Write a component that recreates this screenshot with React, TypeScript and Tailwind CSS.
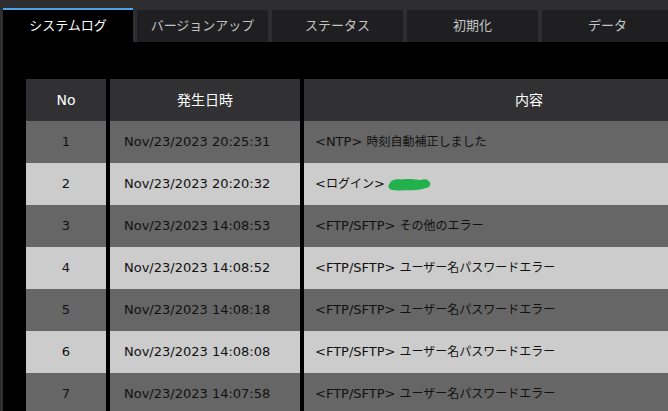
import React from 'react';

const tabs = ['システムログ', 'バージョンアップ', 'ステータス', '初期化', 'データ'];

const rows = [
  { no: 1, date: 'Nov/23/2023 20:25:31', text: '<NTP> 時刻自動補正しました' },
  { no: 2, date: 'Nov/23/2023 20:20:32', text: '<ログイン>', blot: true },
  { no: 3, date: 'Nov/23/2023 14:08:53', text: '<FTP/SFTP> その他のエラー' },
  { no: 4, date: 'Nov/23/2023 14:08:52', text: '<FTP/SFTP> ユーザー名パスワードエラー' },
  { no: 5, date: 'Nov/23/2023 14:08:18', text: '<FTP/SFTP> ユーザー名パスワードエラー' },
  { no: 6, date: 'Nov/23/2023 14:08:08', text: '<FTP/SFTP> ユーザー名パスワードエラー' },
  { no: 7, date: 'Nov/23/2023 14:07:58', text: '<FTP/SFTP> ユーザー名パスワードエラー' },
];

// japanese runs render a touch smaller than the latin ones in the original
function Mixed({ text }: { text: string }) {
  const parts = text.split(/([\u3000-\u9fff\uff00-\uffef]+)/);
  return (
    <>
      {parts.map((p, i) =>
        /[\u3000-\u9fff\uff00-\uffef]/.test(p) ? (
          <span key={i} className="text-[12px]">
            {p}
          </span>
        ) : (
          <span key={i} className="whitespace-pre">
            {p}
          </span>
        )
      )}
    </>
  );
}

function Blot() {
  return (
    <svg width="43" height="13" viewBox="0 0 43 13" className="block shrink-0 ml-[3px] mt-[1px]">
      <path
        d="M1.5 6 C3 1.5 8 1 14 1.5 C20 0.5 27 1.5 32 2 C35 1.5 37 0.5 39.5 2 L42 4.5 C43 7 41.5 9.5 38 10 C33 12 24 12.5 16 12.2 C9 12.8 3 12.5 1.2 10.5 C0 8.5 0.3 7 1.5 6 Z"
        fill="#22b14c"
      />
    </svg>
  );
}

export default function App() {
  return (
    <div
      className="w-[668px] h-[411px] overflow-hidden bg-[#2e2e30] flex flex-col"
      style={{ fontFamily: '"DejaVu Sans", "Noto Sans CJK JP", sans-serif' }}
    >
      <div className="flex items-end gap-[4px] pl-[3px] pt-[8px] h-[42px] shrink-0">
        {tabs.map((t, i) =>
          i === 0 ? (
            <div
              key={t}
              className="w-[130px] h-[34px] shrink-0 bg-black border-t-2 border-[#4aa3e8] flex items-center justify-center text-white text-[13px]"
            >
              {t}
            </div>
          ) : (
            <div
              key={t}
              className="w-[131px] h-[32px] shrink-0 bg-[#1f1f21] flex items-center justify-center text-[#c4c4c4] text-[13px]"
            >
              {t}
            </div>
          )
        )}
      </div>

      <div className="flex-1 ml-[3px] bg-black pt-[37px] pl-[23px]">
        <div className="grid grid-cols-[80px_190px_450px] gap-x-[4px] w-max">
          <div className="h-[42px] bg-[#313133] text-white text-[14px] flex items-center justify-center">No</div>
          <div className="h-[42px] bg-[#313133] text-white text-[14px] flex items-center justify-center">発生日時</div>
          <div className="h-[42px] bg-[#313133] text-white text-[14px] flex items-center justify-center">内容</div>

          {rows.map((r) => {
            const bg = r.no % 2 === 1 ? 'bg-[#666666]' : 'bg-[#cccccc]';
            return (
              <React.Fragment key={r.no}>
                <div className={`h-[42px] ${bg} text-[#111] text-[13px] flex items-center justify-center`}>{r.no}</div>
                <div className={`h-[42px] ${bg} text-[#111] text-[13px] flex items-center pl-[14px]`}>{r.date}</div>
                <div className={`h-[42px] ${bg} text-[#111] text-[13px] flex items-center pl-[11px]`}>
                  <Mixed text={r.text} />
                  {r.blot && <Blot />}
                </div>
              </React.Fragment>
            );
          })}
        </div>
      </div>
    </div>
  );
}
